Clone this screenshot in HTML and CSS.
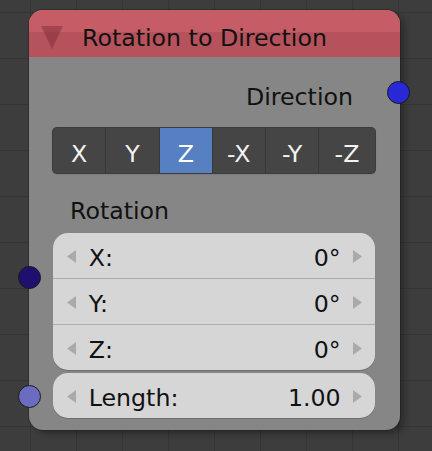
FILE: index.html
```html
<!DOCTYPE html>
<html>
<head>
<meta charset="utf-8">
<link rel="stylesheet" href="styles.css">
</head>
<body>
<div class="canvas">
  <div class="node">
    <div class="header">
      <span class="collapse"></span>
      <span class="title">Rotation to Direction</span>
    </div>
    <div class="content">
      <div class="out-row">Direction</div>
      <div class="seg">
        <div class="opt o1">X</div>
        <div class="opt o2">Y</div>
        <div class="opt o3 active">Z</div>
        <div class="opt o4">-X</div>
        <div class="opt o5">-Y</div>
        <div class="opt o6">-Z</div>
      </div>
      <div class="label-row">Rotation</div>
      <div class="vec">
        <div class="field-row">
          <svg class="arr" viewBox="0 0 9 13"><path d="M9 0 L0 6.5 L9 13 Z"/></svg>
          <span class="flabel">X:</span><span class="fval">0°</span>
          <svg class="arr" viewBox="0 0 9 13"><path d="M0 0 L9 6.5 L0 13 Z"/></svg>
        </div>
        <div class="field-row sep">
          <svg class="arr" viewBox="0 0 9 13"><path d="M9 0 L0 6.5 L9 13 Z"/></svg>
          <span class="flabel">Y:</span><span class="fval">0°</span>
          <svg class="arr" viewBox="0 0 9 13"><path d="M0 0 L9 6.5 L0 13 Z"/></svg>
        </div>
        <div class="field-row sep">
          <svg class="arr" viewBox="0 0 9 13"><path d="M9 0 L0 6.5 L9 13 Z"/></svg>
          <span class="flabel">Z:</span><span class="fval">0°</span>
          <svg class="arr" viewBox="0 0 9 13"><path d="M0 0 L9 6.5 L0 13 Z"/></svg>
        </div>
      </div>
      <div class="field-row length">
        <svg class="arr" viewBox="0 0 9 13"><path d="M9 0 L0 6.5 L9 13 Z"/></svg>
        <span class="flabel">Length:</span><span class="fval">1.00</span>
        <svg class="arr" viewBox="0 0 9 13"><path d="M0 0 L9 6.5 L0 13 Z"/></svg>
      </div>
    </div>
    <span class="socket s-out"></span>
    <span class="socket s-rot"></span>
    <span class="socket s-len"></span>
  </div>
</div>
</body>
</html>
```
FILE: styles.css
```css
html, body {
  margin: 0;
  padding: 0;
}
body {
  width: 432px;
  height: 451px;
  overflow: hidden;
  background-color: #3d3d3d;
  background-image:
    linear-gradient(to right, #353535 1px, transparent 1px),
    linear-gradient(to bottom, #353535 1px, transparent 1px);
  background-size: 46px 46px;
  background-position: 30px 12px;
  font-family: "DejaVu Sans", sans-serif;
  font-size: 23.7px;
  color: #111;
}
.canvas {
  padding: 10px 32px 0 29px;
}
.node {
  position: relative;
  width: 371px;
  background: #868686;
  border-radius: 14px;
  box-shadow: 0 0 0 1px rgba(0,0,0,0.2), 5px 4px 6px rgba(0,0,0,0.28);
}
.header {
  height: 47px;
  display: flex;
  align-items: center;
  border-radius: 14px 14px 0 0;
  background: linear-gradient(to bottom, #c55c66 0, #c55c66 46%, #b6525c 48%, #b6525c 100%);
}
.collapse {
  width: 0;
  height: 0;
  margin-left: 11.5px;
  margin-top: 8px;
  border-left: 11.5px solid transparent;
  border-right: 11.5px solid transparent;
  border-top: 23px solid rgba(120, 40, 50, 0.45);
}
.title {
  margin-left: 19.5px;
  margin-top: 10px;
  line-height: 27px;
}
.content {
  padding: 20px 25px 12px 24px;
}
.out-row {
  height: 40px;
  line-height: 40px;
  text-align: right;
  padding-right: 22px;
}
.seg {
  margin-top: 11px;
  height: 45px;
  display: grid;
  grid-template-columns: 52fr 54fr 52.5fr 53.5fr 53fr 57fr;
  background: #454545;
  border-radius: 4px;
  box-shadow: 0 0 0 1px #3c3c3c, 0 1px 2px rgba(0,0,0,0.25);
  overflow: hidden;
}
.opt {
  display: flex;
  align-items: center;
  justify-content: center;
  padding-top: 6px;
  box-sizing: border-box;
  color: #f2f2f2;
  border-left: 1px solid #383838;
}
.opt.o1 {
  border-left: none;
}
.opt.active {
  background: #5680c2;
  color: #fff;
}
.label-row {
  height: 60px;
  box-sizing: border-box;
  padding: 25px 0 0 17px;
  line-height: 27px;
}
.vec {
  background: #d6d6d6;
  border-radius: 15px;
  box-shadow: 0 1px 0 rgba(0,0,0,0.18);
}
.field-row {
  height: 45px;
  box-sizing: border-box;
  display: flex;
  align-items: center;
  padding: 5px 12.7px 0 13.7px;
}
.field-row.sep {
  height: 46px;
  border-top: 1px solid #adadad;
}
.field-row.length {
  margin-top: 3px;
  background: #d6d6d6;
  border-radius: 15px;
  box-shadow: 0 1px 0 rgba(0,0,0,0.18);
}
.arr {
  width: 9px;
  height: 13px;
  fill: #aaaaaa;
  flex: none;
  margin-top: -4px;
}
.flabel {
  margin-left: 13px;
  flex: 1;
  line-height: 27px;
}
.fval {
  margin-right: 12.7px;
  line-height: 27px;
}
.socket {
  position: absolute;
  border-radius: 50%;
  border: 1px solid #1a1a1a;
  box-sizing: border-box;
  width: 23px;
  height: 23px;
}
.s-out {
  left: 358px;
  top: 70.5px;
  background: #2828d6;
}
.s-rot {
  left: -11.5px;
  top: 256px;
  background: #1f0f6e;
}
.s-len {
  left: -11.5px;
  top: 375px;
  background: #6b6bbf;
}
```
